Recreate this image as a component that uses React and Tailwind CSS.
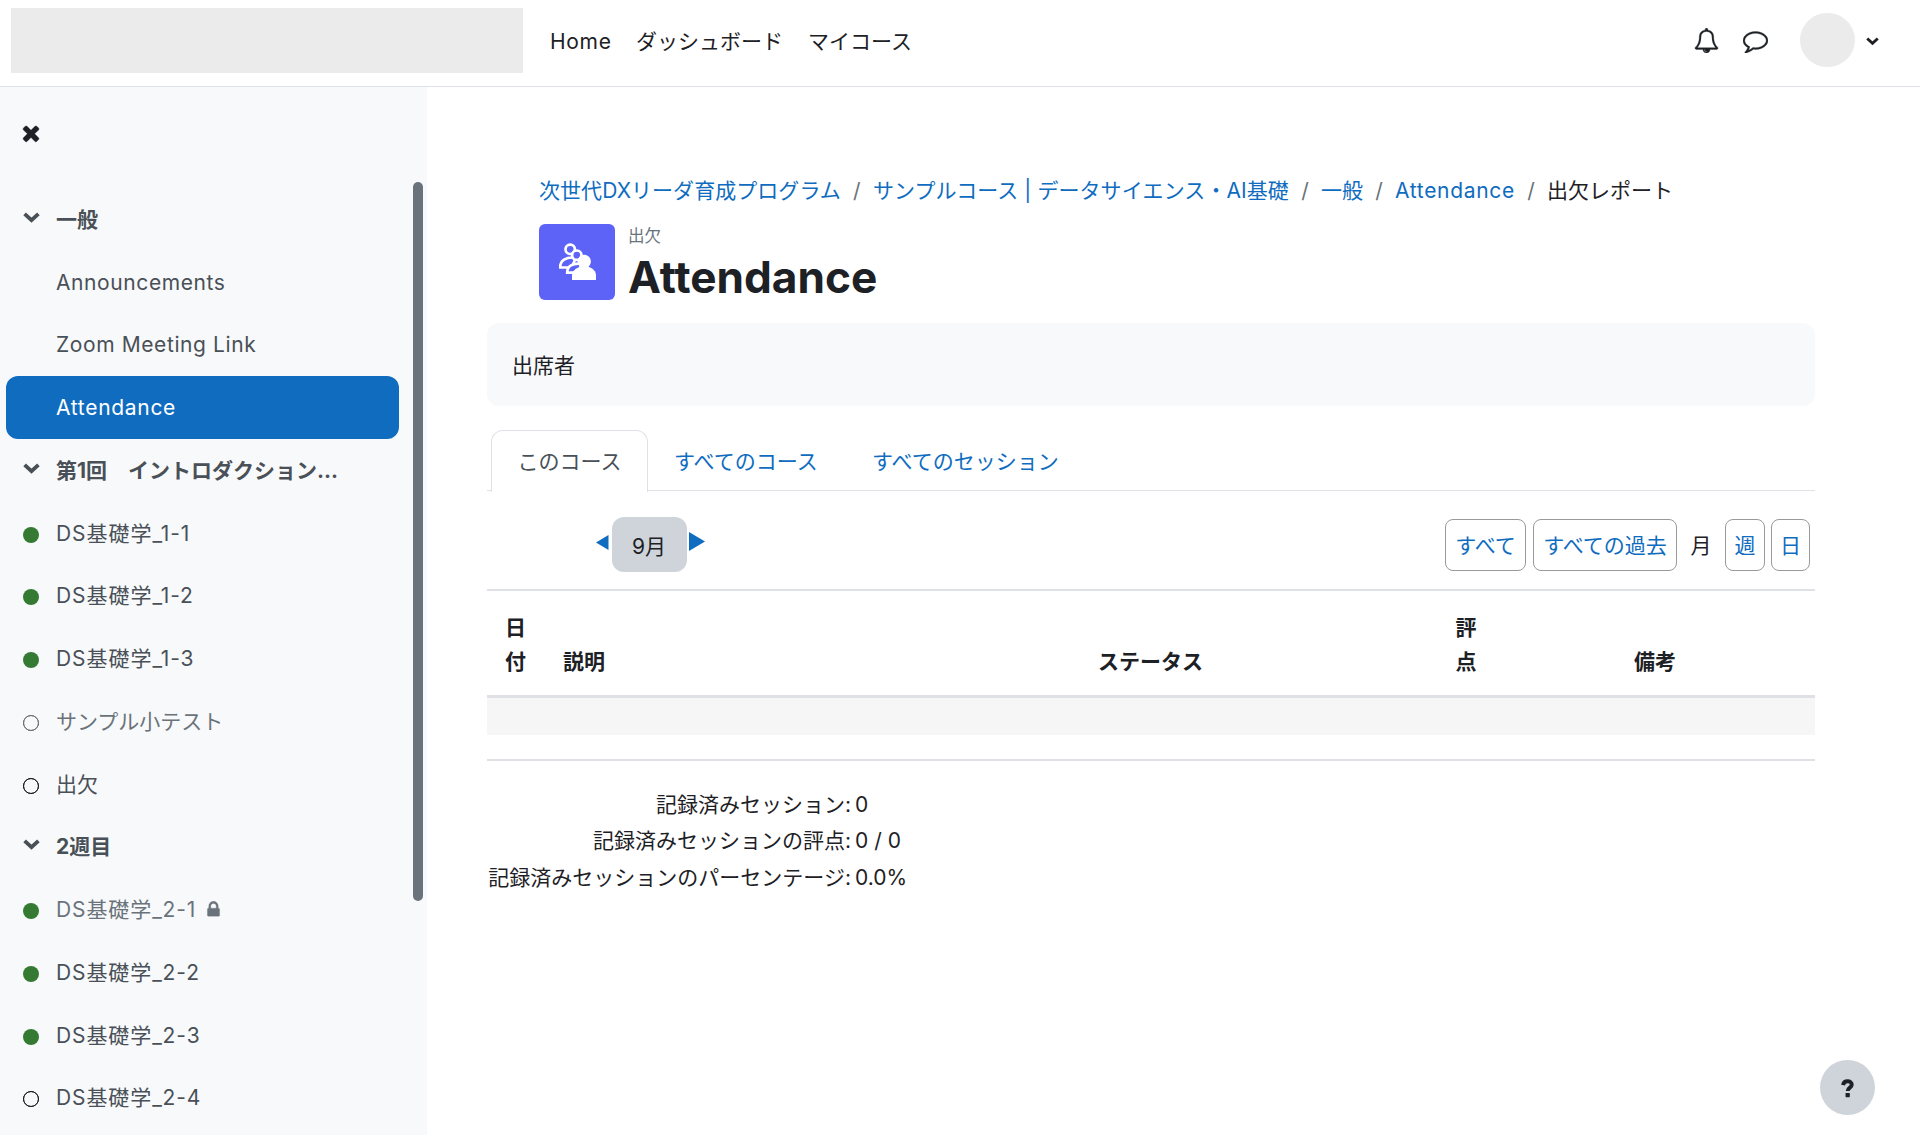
import React from "react";

const ICONS = {
  times:
    "M1490 1322q0 40-28 68l-136 136q-28 28-68 28t-68-28l-294-294-294 294q-28 28-68 28t-68-28l-136-136q-28-28-28-68t28-68l294-294-294-294q-28-28-28-68t28-68l136-136q28-28 68-28t68 28l294 294 294-294q28-28 68-28t68 28l136 136q28 28 28 68t-28 68l-294 294 294 294q28 28 28 68z",
  bell:
    "M912 1696q0-16-16-16-59 0-101.5-42.5t-42.5-101.5q0-16-16-16t-16 16q0 73 51.5 124.5t124.5 51.5q16 0 16-16zm-666-288h1300q-266-300-266-832 0-51-24-105t-69-103-121.5-80.5-169.5-31.5-169.5 31.5-121.5 80.5-69 103-24 105q0 532-266 832zm1482 0q0 52-38 90t-90 38h-448q0 106-75 181t-181 75-181-75-75-181h-448q-52 0-90-38t-38-90q50-42 91-88t85-119.5 74.5-158.5 50-206 19.5-260q0-152 117-282.5t307-158.5q-8-19-8-39 0-40 28-68t68-28 68 28 28 68q0 20-8 39 190 28 307 158.5t117 282.5q0 139 19.5 260t50 206 74.5 158.5 85 119.5 91 88z",
  comment:
    "M896 384q-204 0-381.5 69.5t-282 187.5-104.5 255q0 112 71.5 213.5t201.5 175.5l87 50-27 96q-24 91-70 172 152-63 275-171l43-38 57 6q69 8 130 8 204 0 381.5-69.5t282-187.5 104.5-255-104.5-255-282-187.5-381.5-69.5zm896 512q0 174-120 321.5t-326 233-450 85.5q-70 0-145-8-198 175-460 242-49 14-114 22h-5q-15 0-27-10.5t-16-27.5v-1q-3-4-.5-12t2-10 4.5-9.5l6-9 7-8.5 8-9q7-8 31-34.5t34.5-38 31-39.5 32.5-51 27-59 26-76q-157-89-247.5-220t-90.5-281q0-174 120-321.5t326-233 450-85.5 450 85.5 326 233 120 321.5z",
  lock:
    "M640 768h512v-192q0-106-75-181t-181-75-181 75-75 181v192zm832 96v576q0 40-28 68t-68 28h-960q-40 0-68-28t-28-68v-576q0-40 28-68t68-28h32v-192q0-184 132-316t316-132 316 132 132 316v192h32q40 0 68 28t28 68z",
};

function Glyph({ name, className }) {
  return (
    <svg viewBox="0 0 1792 1792" fill="currentColor" stroke="currentColor" strokeWidth="24" className={className}>
      <path d={ICONS[name]} />
    </svg>
  );
}

function Chevron({ className }) {
  return (
    <svg viewBox="0 0 17 11" fill="none" stroke="currentColor" strokeWidth="3.8" className={className}>
      <path d="M1.6 1.9 8.5 8.2l6.9-6.3" />
    </svg>
  );
}

function AttendanceIcon() {
  return (
    <svg viewBox="0 0 76 76" className="h-[76px] w-[76px]">
      <g fill="#5d63f6" stroke="#fff" strokeWidth="2.7">
        <path d="M21.3 43.5c-.6-6.500 5.500-11 15.500-9.800l-4 9.800z" />
        <circle cx="31.200" cy="25.300" r="4.700" />
        <path d="M28.200 48.600c0-6.500 5-9.900 15-8.800l-4.500 8.800z" />
        <circle cx="37.800" cy="31.200" r="4.700" />
      </g>
      <circle cx="45.200" cy="37.500" r="6.700" fill="#fff" />
      <path d="M33 56v-4.500c0-4.200 3.500-7.300 8-8.800h8.500c4.500 1.500 7.500 4.600 7.500 8.800V56z" fill="#fff" />
    </svg>
  );
}

const SIDEBAR = [
  { kind: "section", label: "一般" },
  { kind: "item", label: "Announcements", tracking: "tracking-[0.6px]" },
  { kind: "item", label: "Zoom Meeting Link", tracking: "tracking-[0.6px]" },
  { kind: "item", label: "Attendance", tracking: "tracking-[0.7px]", active: true },
  { kind: "section", label: "第1回　イントロダクション..." },
  { kind: "item", label: "DS基礎学_1-1", tracking: "tracking-[0.95px]", mark: "done" },
  { kind: "item", label: "DS基礎学_1-2", tracking: "tracking-[0.95px]", mark: "done" },
  { kind: "item", label: "DS基礎学_1-3", tracking: "tracking-[0.95px]", mark: "done" },
  { kind: "item", label: "サンプル小テスト", mark: "dim", dim: true },
  { kind: "item", label: "出欠", mark: "todo" },
  { kind: "section", label: "2週目" },
  { kind: "item", label: "DS基礎学_2-1", tracking: "tracking-[0.9px]", mark: "done", dim: true, locked: true },
  { kind: "item", label: "DS基礎学_2-2", tracking: "tracking-[0.9px]", mark: "done" },
  { kind: "item", label: "DS基礎学_2-3", tracking: "tracking-[0.9px]", mark: "done" },
  { kind: "item", label: "DS基礎学_2-4", tracking: "tracking-[0.9px]", mark: "todo" },
];

const MARKS = {
  done: "bg-[#357a32]",
  todo: "border-[1.5px] border-[#1d2125] outline-[0.5px] -outline-offset-1 outline-[#1d2125]",
  dim: "border-[1.5px] border-[#6a737b] outline-[0.5px] -outline-offset-1 outline-[#6a737b]",
};

function SidebarRow({ row }) {
  const tone = row.active
    ? "bg-[#0f6cbf] text-white"
    : row.dim
      ? "text-[#6a737b]"
      : "text-[#495057]";
  return (
    <li className={`flex h-[62.75px] w-[393px] shrink-0 items-center rounded-xl pl-[17px] ${tone}`}>
      <span className="flex w-[33px] shrink-0">
        {row.kind === "section" && <Chevron className="mb-1 h-[11px] w-[17px]" />}
        {row.mark && <span className={`mt-[3px] h-4 w-4 rounded-full ${MARKS[row.mark]}`} />}
      </span>
      <span className={`whitespace-nowrap ${row.kind === "section" ? "font-bold" : ""} ${row.tracking ?? ""}`}>{row.label}</span>
      {row.locked && <Glyph name="lock" className="ml-[8px] h-[19px] w-[19px]" />}
    </li>
  );
}

const CRUMBS = [
  { label: "次世代DXリーダ育成プログラム", tracking: "tracking-[0.05px]" },
  { label: "サンプルコース | データサイエンス・AI基礎", tracking: "tracking-[0.08px]" },
  { label: "一般", tracking: "" },
  { label: "Attendance", tracking: "tracking-[0.7px]" },
];

const TOTALS = [
  ["記録済みセッション:", "0"],
  ["記録済みセッションの評点:", "0 / 0"],
  ["記録済みセッションのパーセンテージ:", "0.0%"],
];

function ViewButton({ children, className }) {
  return (
    <button className={`h-[52px] rounded-lg border-[1.5px] border-[#999] pt-0.5 text-center text-[#0f6cbf] ${className}`}>
      {children}
    </button>
  );
}

export default function App() {
  return (
    <div className="relative flex h-[1135px] w-[1920px] flex-col overflow-hidden bg-white font-['Inter','Noto_Sans_CJK_JP',sans-serif] text-[21px] leading-[31px] text-[#1d2125]">
      <header className="flex h-[87px] shrink-0 items-center border-b-[1.5px] border-[#dee2e6] pl-[11px]">
        <div className="mb-[6px] h-[65px] w-[512px] bg-[#ebebeb]" />
        <nav className="mb-1 ml-[27px] flex whitespace-nowrap">
          <a className="w-[86px] tracking-[0.7px]">Home</a>
          <a className="w-[172px]">ダッシュボード</a>
          <a>マイコース</a>
        </nav>
        <div className="mb-1.5 ml-auto flex items-center pr-[41px]">
          <Glyph name="bell" className="h-[25px] w-[25px]" />
          <Glyph name="comment" className="ml-6 h-[25px] w-[25px]" />
          <span className="ml-8 h-[54px] w-[55px] rounded-full bg-[#ebebeb]" />
          <Chevron className="mt-[3px] ml-[11px] h-[8.500px] w-[13px]" />
        </div>
      </header>

      <div className="flex min-h-0 flex-1">
        <aside className="flex w-[427px] shrink-0 flex-col bg-[#f8f9fa]">
          <div className="h-[95px] shrink-0 pt-[34px] pl-[18.500px]">
            <Glyph name="times" className="h-6 w-6" />
          </div>
          <div className="flex min-h-0 flex-1">
            <ul className="flex min-h-0 w-[413px] flex-col overflow-hidden pt-[6px] pl-1.5">
              {SIDEBAR.map((row) => (
                <SidebarRow key={row.label} row={row} />
              ))}
            </ul>
            <div className="h-[719px] w-[9.500px] rounded-full bg-[#6a737b]" />
          </div>
        </aside>

        <main className="ml-[60px] flex w-[1328px] flex-col">
          <div className="pt-[88px] pl-[52px]">
            <nav className="flex h-[31px] items-center whitespace-nowrap">
              {CRUMBS.map((crumb) => (
                <React.Fragment key={crumb.label}>
                  <a className={`text-[#0f6cbf] ${crumb.tracking}`}>{crumb.label}</a>
                  <span className="w-8 text-center text-[#6a737b]">/</span>
                </React.Fragment>
              ))}
              <span>出欠レポート</span>
            </nav>
            <div className="mt-[18px] flex h-[76px] gap-[13px]">
              <div className="h-[76px] w-[76px] rounded-md bg-[#5d63f6]">
                <AttendanceIcon />
              </div>
              <div>
                <p className="text-[16.500px] leading-6 text-[#6a737b]">出欠</p>
                <h1 className="mt-0.5 text-[44.200px] leading-[54px] font-bold">Attendance</h1>
              </div>
            </div>
          </div>

          <div className="mt-[23px] flex h-[83px] shrink-0 items-center rounded-xl bg-[#f8f9fa] pt-0.5 pl-[25px]">出席者</div>

          <div className="mt-6 flex h-[61px] shrink-0 border-b-[1.5px] border-[#dee2e6] pl-1 whitespace-nowrap">
            <div className="-mb-0.5 flex w-[157px] items-center rounded-t-xl border-[1.5px] border-b-0 border-[#dee2e6] bg-white pl-[25.500px] text-[#495057]">
              このコース
            </div>
            <a className="flex w-[198px] items-center pt-0.5 pl-[26px] text-[#0f6cbf]">すべてのコース</a>
            <a className="flex items-center pt-0.5 pl-[26px] text-[#0f6cbf]">すべてのセッション</a>
          </div>

          <div className="flex h-[98px] shrink-0 items-center pr-[5px] pl-[109px] whitespace-nowrap">
            <svg viewBox="0 0 12.5 15" className="mt-1 h-[15px] w-[12.500px]">
              <path d="M12.500 0v15L0 7.500z" fill="#0f6cbf" />
            </svg>
            <span className="mt-[9px] ml-[3px] flex h-[55px] w-[75px] items-center justify-center rounded-xl bg-[#ced4da] pt-1">
              9月
            </span>
            <svg viewBox="0 0 16 19" className="mt-0.5 ml-0.5 h-[19px] w-4">
              <path d="M0 0v19l16-9.500z" fill="#0f6cbf" />
            </svg>
            <div className="mt-[9px] ml-auto flex items-center">
              <ViewButton className="w-[81px]">すべて</ViewButton>
              <ViewButton className="ml-[7px] w-[144px]">すべての過去</ViewButton>
              <span className="w-[48px] pt-0.5 text-center">月</span>
              <ViewButton className="w-10">週</ViewButton>
              <ViewButton className="ml-1.5 w-[39px]">日</ViewButton>
            </div>
          </div>

          <div className="grid h-[109px] shrink-0 grid-cols-[76px_408px_360px_270px_214px] items-end border-t-2 border-b-[3px] border-[#dee2e6] pb-[17px] leading-[33.500px] font-bold">
            <div className="w-[57px] text-center">
              日<br />付
            </div>
            <div>説明</div>
            <div className="pl-[127px]">ステータス</div>
            <div className="w-[270px] text-center">
              評<br />点
            </div>
            <div className="pl-[33px]">備考</div>
          </div>
          <div className="h-[37px] shrink-0 bg-[#f6f6f6]" />
          <div className="mt-[24px] h-[1.500px] shrink-0 bg-[#dee2e6]" />

          <dl className="mt-[26px] grid grid-cols-[364px_auto] gap-x-1 leading-[36.700px] whitespace-nowrap">
            {TOTALS.map(([label, value]) => (
              <React.Fragment key={label}>
                <dt className="text-right">{label}</dt>
                <dd>{value}</dd>
              </React.Fragment>
            ))}
          </dl>
        </main>
      </div>

      <button className="absolute right-[45px] bottom-5 flex h-[55px] w-[55px] items-center justify-center rounded-full bg-[#ced4da]">
        <svg viewBox="0 0 14 20" className="mt-0.5 h-[19px] w-[13px]">
          <path d="M2.200 6.300C2.700 3.600 4.600 2.200 7.100 2.200c2.600 0 4.500 1.500 4.500 3.700 0 3.100-4.400 3.200-4.400 6.700" fill="none" stroke="#1d2125" strokeWidth="4.200" />
          <rect x="4.900" y="14.800" width="4.600" height="4.500" rx=".6" fill="#1d2125" />
        </svg>
      </button>
    </div>
  );
}
